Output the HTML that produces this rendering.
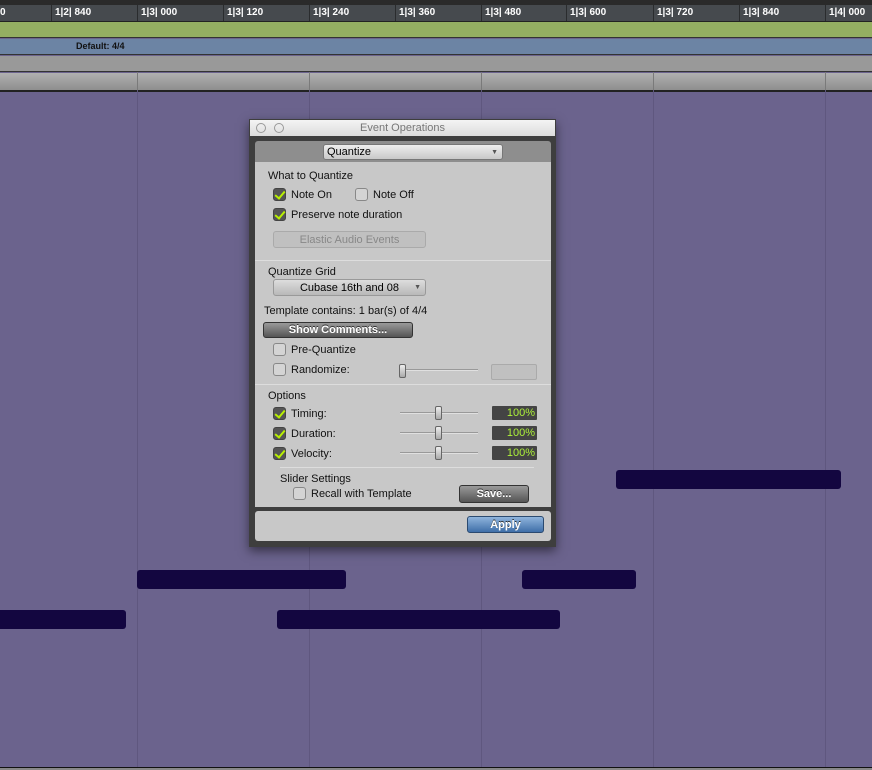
<!DOCTYPE html>
<html><head><style>
*{margin:0;padding:0;box-sizing:border-box}
body{width:872px;height:770px;overflow:hidden;background:#6b638d;font-family:"Liberation Sans",sans-serif;position:relative}
.a{position:absolute}
.rl{position:absolute;top:5px;height:16px;width:1px;background:#2a2c2e}
.rt{position:absolute;top:7px;color:#fff;font-size:10px;font-weight:bold}
.vl{position:absolute;top:90px;height:677px;width:1px;background:#5f577f}
.gl{position:absolute;top:72px;height:18px;width:1px;background:#7a7a7a}
.note{position:absolute;height:19px;background:#130640;border-radius:3px}
.t{position:absolute;font-size:11px;color:#111;white-space:nowrap}
.cb{position:absolute;width:13px;height:13px;border:1px solid #888;border-radius:3px;background:#d4d4d4}
.cb.on{background:#555;border-color:#444}
.cb.on::after{content:"";position:absolute;left:3px;top:0px;width:4px;height:8px;border:solid #b8f000;border-width:0 2.5px 2.5px 0;transform:rotate(40deg)}
.sl{position:absolute;height:2px;width:78px;background:#999;border-bottom:1px solid #e0e0e0}
.th{position:absolute;width:7px;height:14px;border:1px solid #666;border-radius:2px;background:linear-gradient(#eee,#aaa)}
.pct{position:absolute;width:45px;height:14px;background:#444;color:#aef23a;font-size:11px;text-align:right;padding-right:2px;line-height:15px;border-radius:1px}
.btn{position:absolute;color:#fff;font-size:11px;font-weight:bold;text-align:center;border:1px solid #333;border-radius:3px;background:linear-gradient(#9a9a9a,#555);text-shadow:0 -1px 0 #333}
</style></head><body>
<div class="a" style="left:0;top:0;width:872px;height:5px;background:#2a2a2a"></div>
<div class="a" style="left:0;top:5px;width:872px;height:17px;background:#464a4e;border-bottom:1px solid #222"></div>
<div class="rl" style="left:51px"></div><div class="rl" style="left:137px"></div><div class="rl" style="left:223px"></div><div class="rl" style="left:309px"></div><div class="rl" style="left:395px"></div><div class="rl" style="left:481px"></div><div class="rl" style="left:566px"></div><div class="rl" style="left:653px"></div><div class="rl" style="left:739px"></div><div class="rl" style="left:825px"></div>
<div class="rt" style="left:0">0</div>
<div class="rt" style="left:55px">1|2| 840</div><div class="rt" style="left:141px">1|3| 000</div><div class="rt" style="left:227px">1|3| 120</div><div class="rt" style="left:313px">1|3| 240</div><div class="rt" style="left:399px">1|3| 360</div><div class="rt" style="left:485px">1|3| 480</div><div class="rt" style="left:570px">1|3| 600</div><div class="rt" style="left:657px">1|3| 720</div><div class="rt" style="left:743px">1|3| 840</div><div class="rt" style="left:829px">1|4| 000</div>
<div class="a" style="left:0;top:22px;width:872px;height:16px;background:#94ae62;border-bottom:1px solid #333"></div>
<div class="a" style="left:0;top:39px;width:872px;height:16px;background:#6c84a4;border-bottom:1px solid #333"></div>
<div class="a" style="left:76px;top:41px;font-size:9px;font-weight:bold;color:#111">Default: 4/4</div>
<div class="a" style="left:0;top:56px;width:872px;height:16px;background:#999;border-bottom:1px solid #333"></div>
<div class="a" style="left:0;top:73px;width:872px;height:17px;background:linear-gradient(#b0b0b0,#8e8e8e)"></div>
<div class="gl" style="left:137px"></div><div class="gl" style="left:309px"></div><div class="gl" style="left:481px"></div><div class="gl" style="left:653px"></div><div class="gl" style="left:825px"></div>
<div class="a" style="left:0;top:90px;width:872px;height:2px;background:#222"></div>
<div class="vl" style="left:137px"></div><div class="vl" style="left:309px"></div><div class="vl" style="left:481px"></div><div class="vl" style="left:653px"></div><div class="vl" style="left:825px"></div>
<div class="a" style="left:0;top:767px;width:872px;height:1px;background:#111"></div>
<div class="a" style="left:0;top:768px;width:872px;height:2px;background:#888"></div>
<div class="note" style="left:616px;top:470px;width:225px"></div>
<div class="note" style="left:137px;top:570px;width:209px"></div>
<div class="note" style="left:522px;top:570px;width:114px"></div>
<div class="note" style="left:-4px;top:610px;width:130px"></div>
<div class="note" style="left:277px;top:610px;width:283px"></div>

<div class="a" style="left:249px;top:119px;width:307px;height:428px;background:#3e3e3e;box-shadow:0 4px 10px rgba(0,0,0,.5)"></div>
<div class="a" style="left:250px;top:120px;width:305px;height:16px;background:linear-gradient(#f4f4f4,#dcdcdc)"></div>
<div class="a" style="left:256px;top:123px;width:10px;height:10px;border:1px solid #999;border-radius:50%"></div>
<div class="a" style="left:274px;top:123px;width:10px;height:10px;border:1px solid #999;border-radius:50%"></div>
<div class="a" style="left:250px;top:122px;width:305px;text-align:center;font-size:11px;color:#777">Event Operations</div>
<div class="a" style="left:255px;top:141px;width:296px;height:21px;background:#8e8e8e;border-radius:3px 3px 0 0"></div>
<div class="a" style="left:323px;top:144px;width:180px;height:16px;background:linear-gradient(#eee,#c8c8c8);border:1px solid #777;border-radius:3px;font-size:11px;padding-left:3px;line-height:15px">Quantize<span style="position:absolute;right:4px;top:0;font-size:7px;color:#555">▼</span></div>
<div class="a" style="left:255px;top:162px;width:296px;height:345px;background:#c8c8c8"></div>
<div class="a" style="left:255px;top:260px;width:296px;height:1px;background:#b0b0b0;border-bottom:1px solid #ddd"></div>
<div class="a" style="left:255px;top:384px;width:296px;height:1px;background:#b0b0b0;border-bottom:1px solid #ddd"></div>
<div class="a" style="left:280px;top:467px;width:254px;height:1px;background:#b0b0b0;border-bottom:1px solid #ddd"></div>
<div class="a" style="left:255px;top:511px;width:296px;height:30px;background:#c8c8c8;border-radius:3px"></div>

<div class="t" style="left:268px;top:170px">What to Quantize</div>
<div class="cb on" style="left:273px;top:188px"></div><div class="t" style="left:291px;top:189px">Note On</div>
<div class="cb" style="left:355px;top:188px"></div><div class="t" style="left:373px;top:189px">Note Off</div>
<div class="cb on" style="left:273px;top:208px"></div><div class="t" style="left:291px;top:209px">Preserve note duration</div>
<div class="a" style="left:273px;top:231px;width:153px;height:17px;background:#c0c0c0;border:1px solid #aaa;border-radius:3px;font-size:11px;color:#888;text-align:center;line-height:17px">Elastic Audio Events</div>

<div class="t" style="left:268px;top:266px">Quantize Grid</div>
<div class="a" style="left:273px;top:279px;width:153px;height:17px;background:linear-gradient(#ddd,#b8b8b8);border:1px solid #999;border-radius:3px;font-size:11px;text-align:center;line-height:16px">Cubase 16th and 08<span style="position:absolute;right:4px;top:0;font-size:7px;color:#555">▼</span></div>
<div class="t" style="left:264px;top:305px">Template contains: 1 bar(s) of 4/4</div>
<div class="btn" style="left:263px;top:322px;width:150px;height:16px;line-height:15px">Show Comments...</div>
<div class="cb" style="left:273px;top:343px"></div><div class="t" style="left:291px;top:344px">Pre-Quantize</div>
<div class="cb" style="left:273px;top:363px"></div><div class="t" style="left:291px;top:364px">Randomize:</div>
<div class="sl" style="left:400px;top:369px"></div><div class="th" style="left:399px;top:364px"></div>
<div class="a" style="left:491px;top:364px;width:46px;height:16px;background:#c0c0c0;border:1px solid #aaa;border-radius:2px"></div>

<div class="t" style="left:268px;top:390px">Options</div>
<div class="cb on" style="left:273px;top:407px"></div><div class="t" style="left:291px;top:408px">Timing:</div>
<div class="sl" style="left:400px;top:412px"></div><div class="th" style="left:435px;top:406px"></div><div class="pct" style="left:492px;top:406px">100%</div>
<div class="cb on" style="left:273px;top:427px"></div><div class="t" style="left:291px;top:428px">Duration:</div>
<div class="sl" style="left:400px;top:432px"></div><div class="th" style="left:435px;top:426px"></div><div class="pct" style="left:492px;top:426px">100%</div>
<div class="cb on" style="left:273px;top:447px"></div><div class="t" style="left:291px;top:448px">Velocity:</div>
<div class="sl" style="left:400px;top:452px"></div><div class="th" style="left:435px;top:446px"></div><div class="pct" style="left:492px;top:446px">100%</div>

<div class="t" style="left:280px;top:473px">Slider Settings</div>
<div class="cb" style="left:293px;top:487px"></div><div class="t" style="left:311px;top:488px">Recall with Template</div>
<div class="btn" style="left:459px;top:485px;width:70px;height:18px;line-height:17px">Save...</div>
<div class="btn" style="left:467px;top:516px;width:77px;height:17px;line-height:16px;background:linear-gradient(#8fb4dc,#3f6fa8);border-color:#2b4a70">Apply</div>
</body></html>
